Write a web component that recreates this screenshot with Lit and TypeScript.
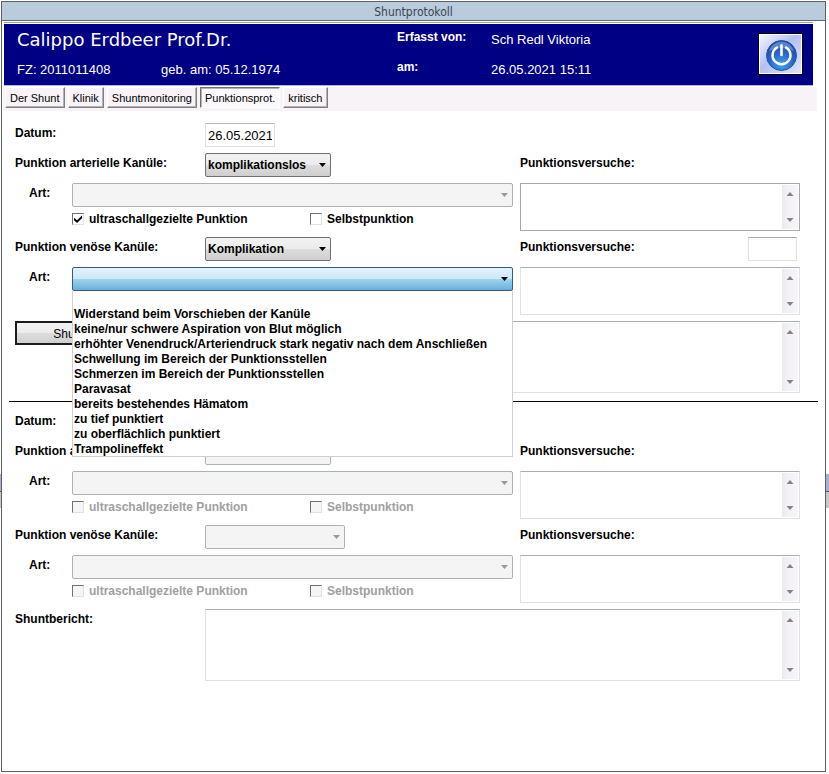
import { LitElement, html, css, svg, nothing } from "lit";
import { customElement, property } from "lit/decorators.js";

const text = css`
  * {
    box-sizing: border-box;
  }
  input,
  select,
  textarea,
  button {
    font: inherit;
    color: inherit;
    margin: 0;
  }
`;

/** Drop-down in the classic raised style; can show its list opened below. */
@customElement("combo-box")
class ComboBox extends LitElement {
  @property() label = "";
  @property() value = "";
  @property({ type: Boolean }) disabled = false;
  @property({ type: Boolean, reflect: true }) open = false;
  @property({ attribute: false }) options: string[] = [];

  static styles = [
    text,
    css`
      :host {
        display: block;
        position: relative;
        height: 24px;
      }
      select {
        display: block;
        width: 100%;
        height: 24px;
        padding: 0 16px 0 2px;
        appearance: none;
        border: 1px solid #707070;
        border-radius: 2px;
        background: linear-gradient(#f2f2f2, #ebebeb 50%, #dddddd 50%, #cfcfcf);
        font-weight: bold;
        outline: none;
      }
      select:disabled {
        border-color: #adb2b5;
        background: #f4f4f4;
        opacity: 1;
      }
      :host([open]) select {
        border-color: #3c5a78;
        background: linear-gradient(#e2f2fb, #cbe8f8 50%, #a0d4ee 50%, #68b0dc);
      }
      .arrow {
        position: absolute;
        top: 10px;
        right: 5px;
        width: 7px;
        height: 4px;
        background: #000;
        clip-path: polygon(0 0, 100% 0, 50% 100%);
        pointer-events: none;
      }
      .arrow.dim {
        background: #9a9a9a;
      }
      .list {
        position: absolute;
        z-index: 5;
        top: 100%;
        left: 0;
        right: 0;
        margin: 0;
        padding: 0 0 0 1px;
        list-style: none;
        background: #fff;
        border: 1px solid #cfcfd4;
        border-top: 0;
        font-weight: bold;
      }
      .list li {
        height: 15px;
        line-height: 17px;
        white-space: nowrap;
      }
    `,
  ];

  render() {
    return html`
      <select aria-label=${this.label} ?disabled=${this.disabled}>
        <option>${this.value}</option>
      </select>
      <span class="arrow ${this.disabled ? "dim" : ""}"></span>
      ${this.open
        ? html`<ul class="list" role="listbox">
            ${this.options.map((o) => html`<li role="option">${o}</li>`)}
          </ul>`
        : nothing}
    `;
  }
}

/** Multi-line field with an always visible scroll strip. */
@customElement("memo-field")
class MemoField extends LitElement {
  @property() label = "";
  @property({ type: Boolean, reflect: true }) strong = false;

  static styles = [
    text,
    css`
      :host {
        display: block;
        position: relative;
        height: 48px;
      }
      textarea {
        display: block;
        width: 100%;
        height: 100%;
        padding: 3px 20px 3px 3px;
        border: 1px solid #e0e1e4;
        border-top-color: #abadb3;
        background: #fff;
        resize: none;
        overflow: hidden;
        outline: none;
      }
      :host([strong]) textarea {
        border-color: #a8a8ac;
      }
      .strip {
        position: absolute;
        top: 2px;
        bottom: 2px;
        right: 2px;
        width: 16px;
        padding: 7px 0;
        display: flex;
        flex-direction: column;
        align-items: center;
        justify-content: space-between;
        background: linear-gradient(90deg, #ebe9ed, #f3f0f5 30%, #f8f5fa);
        pointer-events: none;
      }
      .strip i {
        width: 7px;
        height: 4px;
        background: #858388;
        clip-path: polygon(50% 0, 100% 100%, 0 100%);
      }
      .strip i.down {
        clip-path: polygon(0 0, 100% 0, 50% 100%);
      }
    `,
  ];

  render() {
    return html`<textarea aria-label=${this.label}></textarea>
      <span class="strip"><i></i><i class="down"></i></span>`;
  }
}

interface Puncture {
  title: string;
  result: string;
  enabled: boolean;
  wide?: boolean;
  open?: boolean;
  guided?: boolean;
  attempts?: boolean;
  strong?: boolean;
}

const COMPLICATIONS = [
  "",
  "Widerstand beim Vorschieben der Kanüle",
  "keine/nur schwere Aspiration von Blut möglich",
  "erhöhter Venendruck/Arteriendruck stark negativ nach dem Anschließen",
  "Schwellung im Bereich der Punktionsstellen",
  "Schmerzen im Bereich der Punktionsstellen",
  "Paravasat",
  "bereits bestehendes Hämatom",
  "zu tief punktiert",
  "zu oberflächlich punktiert",
  "Trampolineffekt",
];

const TABS = ["Der Shunt", "Klinik", "Shuntmonitoring", "Punktionsprot.", "kritisch"];

const powerIcon = svg`
  <defs>
    <linearGradient id="plate" x1="0" y1="0" x2="1" y2="1">
      <stop offset="0" stop-color="#f4f5ff" />
      <stop offset="0.45" stop-color="#b4c0f4" />
      <stop offset="1" stop-color="#dfe4ff" />
    </linearGradient>
    <radialGradient id="ball" cx="0.5" cy="0.8" r="0.8">
      <stop offset="0" stop-color="#3fa3e8" />
      <stop offset="0.5" stop-color="#2a66cc" />
      <stop offset="1" stop-color="#1c3f98" />
    </radialGradient>
  </defs>
  <rect x="0" y="0" width="41" height="38" fill="url(#plate)" />
  <circle cx="21.5" cy="20.5" r="15" fill="url(#ball)" stroke="#1f5a9c" />
  <path d="M9 16a13 13 0 0 1 25 0q-12.500-6-25 0z" fill="#86a8ea" opacity="0.6" />
  <path d="M17 12.500a9 9 0 1 0 9 0" fill="none" stroke="#fff" stroke-width="2.400" stroke-linecap="round" />
  <path d="M21.500 10.500v9.500" stroke="#fff" stroke-width="2.600" stroke-linecap="round" />`;

@customElement("app-root")
class AppRoot extends LitElement {
  static styles = [
    text,
    css`
      :host {
        display: flex;
        box-sizing: border-box;
        min-height: 100vh;
        padding: 1px 3px 2px 1px;
        background: linear-gradient(
          #fff 474px,
          #a9aedb 474px 491px,
          #55555c 491px 492px,
          #c8c8c8 492px 508px,
          #fff 508px
        );
        font: 12px "Liberation Sans", Arial, sans-serif;
        color: #000;
      }
      .window {
        flex: 1;
        min-width: 0;
        border: 1px solid #5c6064;
        background: #fff;
      }
      .title {
        height: 19px;
        border-bottom: 1px solid #5c6a78;
        background: #b9cbdc;
        color: #3c4650;
        font: 12px/20px "DejaVu Sans Condensed", "DejaVu Sans", sans-serif;
        text-align: center;
      }
      .patient {
        display: grid;
        grid-template-columns: 380px 94px 1fr 45px;
        grid-template-rows: 30px 30px;
        align-items: center;
        margin: 3px 12px 0 2px;
        padding: 0 10px 1px 13px;
        box-shadow: 0 -1px #fff, 0 -2px #a0a0a0, 0 1px #b4b4d8;
        background: #000084;
        color: #fff;
        font-size: 13px;
      }
      .name {
        margin: 0;
        font: 18px "DejaVu Sans", sans-serif;
      }
      .ids {
        display: grid;
        grid-template-columns: 144px auto;
      }
      .meta {
        font-size: 12px;
        font-weight: bold;
        padding-bottom: 4px;
      }
      .power {
        grid-column: 4;
        grid-row: 1 / 3;
        width: 45px;
        height: 42px;
        padding: 0;
        border: 1px solid #000;
        background: #fff;
      }
      .power svg {
        display: block;
        width: 43px;
        height: 40px;
        border: 1px solid #fff;
      }
      .tabs {
        display: flex;
        gap: 3px;
        height: 24px;
        margin: 2px 8px 0 1px;
        padding-left: 2px;
        background: #f7f3f7;
      }
      .tab {
        height: 21px;
        padding: 0 4px;
        border: 1px solid;
        border-color: #fff #808080 #808080 #fff;
        box-shadow: inset -1px -1px #b4b0b4;
        background: #f7f3f7;
        font-size: 11px;
      }
      .tab.on {
        padding-top: 1px;
        border-color: #707070 #fff #fff #707070;
        box-shadow: inset 1px 1px #b4b0b4;
        background: #fbf9fb;
      }
      .sheet {
        padding: 12px 25px 0 13px;
        font-weight: bold;
      }
      .rule + .sheet {
        padding-top: 9px;
      }
      .rule {
        margin: 8px 7px 0;
        border: 0;
        border-top: 1px solid #000;
      }
      .line {
        display: flex;
        height: 30px;
      }
      .cap {
        flex: none;
        width: 190px;
        line-height: 20px;
      }
      .date {
        width: 70px;
        height: 24px;
        padding: 0 2px;
        border: 1px solid #e0e1e4;
        border-top-color: #b8bac0;
        font-size: 13px;
        font-weight: normal;
      }
      .block {
        display: grid;
        grid-template-columns: minmax(0, 1fr) 280px;
        grid-template-rows: 30px 54px;
        column-gap: 7px;
      }
      .head {
        display: flex;
      }
      .pick {
        width: 126px;
      }
      .pick.wide {
        width: 140px;
      }
      .tries {
        display: flex;
        justify-content: space-between;
        line-height: 20px;
        padding-right: 3px;
      }
      .count {
        width: 49px;
        height: 24px;
        border: 1px solid #e0e1e4;
        border-top-color: #abadb3;
      }
      .kind {
        display: grid;
        grid-template-columns: 57px minmax(0, 1fr);
        grid-template-rows: 24px 24px;
      }
      .art {
        padding-left: 14px;
        line-height: 20px;
      }
      .checks {
        grid-column: 2;
        display: grid;
        grid-template-columns: 238px auto;
        align-items: center;
      }
      .check {
        display: flex;
        align-items: center;
        gap: 5px;
      }
      .check.off {
        color: #a0a0a0;
      }
      .check input {
        appearance: none;
        width: 12px;
        height: 12px;
        border: 1px solid;
        border-color: #707070 #e2e0e2 #e2e0e2 #707070;
        background: #fff;
        position: relative;
      }
      .check.off input {
        background: #f7f3f7;
      }
      .check input:checked::after {
        content: "";
        position: absolute;
        inset: 1px;
        background: #000;
        clip-path: polygon(0 35%, 38% 65%, 100% 5%, 100% 40%, 38% 100%, 0 65%);
      }
      .report {
        display: flex;
        align-items: flex-start;
      }
      .report memo-field {
        flex: 1;
        height: 72px;
      }
      .slot {
        flex: none;
        width: 190px;
        line-height: 20px;
      }
      .write {
        display: block;
        width: 144px;
        height: 24px;
        border: 2px solid #1c1c1c;
        background: linear-gradient(#f2f2f2, #ebebeb 50%, #dddddd 50%, #cfcfcf);
        font-weight: normal;
      }
    `,
  ];

  private date(value: string, id: string) {
    return html`<div class="line">
      <label class="cap" for=${id}>Datum:</label>
      <input class="date" id=${id} .value=${value} />
    </div>`;
  }

  private puncture(p: Puncture) {
    return html`<div class="block">
      <div class="head">
        <span class="cap">${p.title}</span>
        <combo-box
          class="pick ${p.wide ? "wide" : ""}"
          label=${p.title}
          value=${p.result}
          ?disabled=${!p.enabled}
        ></combo-box>
      </div>
      <div class="tries">
        <span>Punktionsversuche:</span>
        ${p.attempts ? html`<input class="count" aria-label="Punktionsversuche" />` : nothing}
      </div>
      <div class="kind">
        <span class="art">Art:</span>
        <combo-box
          label="Art"
          ?disabled=${!p.open}
          ?open=${p.open}
          .options=${COMPLICATIONS}
        ></combo-box>
        <div class="checks">
          ${p.open
            ? nothing
            : ["ultraschallgezielte Punktion", "Selbstpunktion"].map(
                (c, i) => html`<label class="check ${p.enabled ? "" : "off"}">
                  <input
                    type="checkbox"
                    ?disabled=${!p.enabled}
                    .checked=${i === 0 && !!p.guided}
                  />${c}
                </label>`
              )}
        </div>
      </div>
      <memo-field label="Punktionsversuche" ?strong=${p.strong}></memo-field>
    </div>`;
  }

  render() {
    return html`<div class="window">
      <div class="title">Shuntprotokoll</div>
      <header class="patient">
        <h1 class="name">Calippo Erdbeer Prof.Dr.</h1>
        <span class="meta">Erfasst von:</span>
        <span>Sch Redl Viktoria</span>
        <button class="power" aria-label="Beenden">
          <svg viewBox="0 0 41 38">${powerIcon}</svg>
        </button>
        <div class="ids"><span>FZ: 2011011408</span><span>geb. am: 05.12.1974</span></div>
        <span class="meta">am:</span>
        <span>26.05.2021 15:11</span>
      </header>
      <nav class="tabs">
        ${TABS.map((t, i) => html`<button class="tab ${i === 3 ? "on" : ""}">${t}</button>`)}
      </nav>
      <section class="sheet">
        ${this.date("26.05.2021", "date-1")}
        ${this.puncture({
          title: "Punktion arterielle Kanüle:",
          result: "komplikationslos",
          enabled: true,
          guided: true,
          strong: true,
        })}
        ${this.puncture({
          title: "Punktion venöse Kanüle:",
          result: "Komplikation",
          enabled: true,
          open: true,
          attempts: true,
        })}
        <div class="report">
          <div class="slot"><button class="write">Shuntbericht</button></div>
          <memo-field label="Shuntbericht"></memo-field>
        </div>
      </section>
      <hr class="rule" />
      <section class="sheet">
        ${this.date("", "date-2")}
        ${this.puncture({ title: "Punktion arterielle Kanüle:", result: "", enabled: false })}
        ${this.puncture({
          title: "Punktion venöse Kanüle:",
          result: "",
          enabled: false,
          wide: true,
        })}
        <div class="report">
          <span class="slot">Shuntbericht:</span>
          <memo-field label="Shuntbericht"></memo-field>
        </div>
      </section>
    </div>`;
  }
}
